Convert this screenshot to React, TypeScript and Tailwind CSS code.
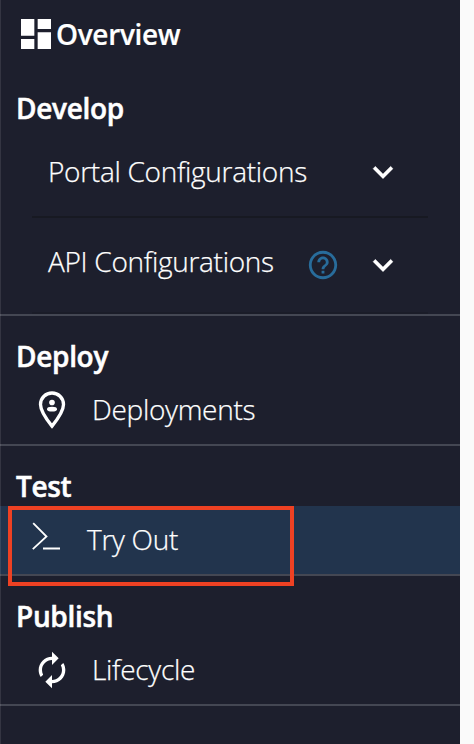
import type { ReactNode } from "react";

function Icon({ size, children, className = "" }: { size: number; children: ReactNode; className?: string }) {
  return (
    <svg width={size} height={size} viewBox="0 0 24 24" fill="currentColor" className={`shrink-0 ${className}`}>
      {children}
    </svg>
  );
}

function Chevron() {
  return (
    <Icon size={40}>
      <path d="M16.59 8.59 12 13.17 7.41 8.59 6 10l6 6 6-6z" stroke="currentColor" strokeWidth="0.2" />
    </Icon>
  );
}

function Label({ children, className = "" }: { children: ReactNode; className?: string }) {
  return (
    <span
      className={`mb-[2px] block text-[28px] font-light leading-[38px] tracking-[-0.29px] [-webkit-text-stroke:0.25px_white] ${className}`}
    >
      {children}
    </span>
  );
}

function Section({ title, children }: { title: string; children: ReactNode }) {
  return (
    <section className="flex h-[130px] flex-col border-b-2 border-[#444753]">
      <h2 className="h-[60px] pl-4 pt-[21px] text-[28px] font-semibold leading-[38px] tracking-[-0.32px] [-webkit-text-stroke:0.5px_white]">
        {title}
      </h2>
      {children}
    </section>
  );
}

export default function App() {
  return (
    <div className="h-[744px] w-[474px] overflow-hidden bg-[#fafafa] font-['Open_Sans',sans-serif] text-white">
      <nav className="relative h-full w-[460px] bg-[#1d1f2d]">
        <div className="absolute inset-y-0 left-0 w-px bg-white/10" />
        <div className="flex h-[74px] items-start pl-4 pt-[14px]">
          <Icon size={40}>
            <path d="M3 13h8V3H3v10zm0 8h8v-6H3v6zm10 0h8V11h-8v10zm0-18v6h8V3h-8z" />
          </Icon>
          <span className="text-[28px] font-semibold leading-[40px] tracking-[-0.32px] [-webkit-text-stroke:0.2px_white]">
            Overview
          </span>
        </div>
        <section className="h-[242px] border-b-2 border-[#444753]">
          <h2 className="h-[54px] pl-4 pt-[15px] text-[28px] font-semibold leading-[38px] tracking-[-0.32px] [-webkit-text-stroke:0.5px_white]">
            Develop
          </h2>
          <div className="ml-8 flex h-[90px] w-[396px] items-center border-b-2 border-[#171922] pl-4">
            <Label className="w-[315px]">Portal Configurations</Label>
            <Chevron />
          </div>
          <div className="ml-8 flex h-[96px] w-[396px] items-center border-b-2 border-[#1a1c28] pl-4">
            <Label className="w-[258px] pb-[6px]">API Configurations</Label>
            <Icon size={34} className="mr-[23px] text-[#286c9b]">
              <path d="M11 18h2v-2h-2v2zm1-16C6.480 2 2 6.480 2 12s4.480 10 10 10 10-4.480 10-10S17.520 2 12 2zm0 18c-4.410 0-8-3.590-8-8s3.590-8 8-8 8 3.590 8 8-3.590 8-8 8zm0-14c-2.210 0-4 1.790-4 4h2c0-1.100.9-2 2-2s2 .9 2 2c0 2-3 1.750-3 5h2c0-2.250 3-2.500 3-5 0-2.210-1.790-4-4-4z" />
            </Icon>
            <Chevron />
          </div>
        </section>
        <Section title="Deploy">
          <div className="flex h-[68px] items-center pl-8">
            <Icon size={40}>
              <path
                d="M12 1.800c3.700 0 6.900 2.900 6.900 6.900 0 3.800-2.800 7.900-6.900 13-4.100-5.100-6.900-9.200-6.900-13 0-4 3.200-6.900 6.900-6.900z"
                fill="none"
                stroke="currentColor"
                strokeWidth="2"
              />
              <circle cx="12" cy="7.500" r="1.700" />
              <ellipse cx="12" cy="11.500" rx="3" ry="1.400" />
            </Icon>
            <Label className="pl-5">Deployments</Label>
          </div>
        </Section>
        <Section title="Test">
          <div className="flex h-[68px] items-center bg-[#22344d] pl-8">
            <svg
              width="30"
              height="30"
              viewBox="0 0 30 30"
              fill="none"
              stroke="currentColor"
              strokeWidth="1.800"
              className="mb-[6px] shrink-0"
            >
              <path d="m1.200 1.200 13.300 13.300L.8 27.200M11 26.500h17" />
            </svg>
            <Label className="pl-[25px]">Try Out</Label>
          </div>
        </Section>
        <Section title="Publish">
          <div className="flex h-[68px] items-center pl-8">
            <Icon size={40}>
              <path d="M12 6v3l4-4-4-4v3c-4.420 0-8 3.580-8 8 0 1.570.46 3.030 1.240 4.260L6.700 14.800c-.45-.83-.7-1.790-.7-2.800 0-3.310 2.690-6 6-6zm6.760 1.740L17.300 9.200c.44.84.7 1.790.7 2.800 0 3.310-2.690 6-6 6v-3l-4 4 4 4v-3c4.420 0 8-3.580 8-8 0-1.570-.46-3.030-1.240-4.260z" />
            </Icon>
            <Label className="pl-5">Lifecycle</Label>
          </div>
        </Section>
        <div className="absolute left-2 top-[506px] h-20 w-[286px] border-4 border-[#ee4123]" />
      </nav>
    </div>
  );
}
